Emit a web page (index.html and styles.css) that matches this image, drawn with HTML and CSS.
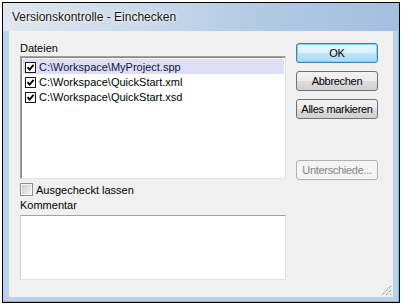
FILE: index.html
```html
<!DOCTYPE html>
<html lang="de">
<head>
    <meta charset="UTF-8">
    <title>Versionskontrolle - Einchecken</title>
    <link rel="stylesheet" href="styles.css">
</head>
<body>
    <div class="window">
        <div class="titlebar">
            <span class="title">Versionskontrolle - Einchecken</span>
        </div>

        <div class="client">
            <div class="left">
                <div class="label">Dateien</div>
                <div class="filelist">
                    <div class="file-row selected">
                        <span class="check"><svg viewBox="0 0 9 9"><path d="M1.5 4.2 L3.6 6.5 L7.6 1.8" /></svg></span>
                        <span class="file-name">C:\Workspace\MyProject.spp</span>
                    </div>
                    <div class="file-row">
                        <span class="check"><svg viewBox="0 0 9 9"><path d="M1.5 4.2 L3.6 6.5 L7.6 1.8" /></svg></span>
                        <span class="file-name">C:\Workspace\QuickStart.xml</span>
                    </div>
                    <div class="file-row">
                        <span class="check"><svg viewBox="0 0 9 9"><path d="M1.5 4.2 L3.6 6.5 L7.6 1.8" /></svg></span>
                        <span class="file-name">C:\Workspace\QuickStart.xsd</span>
                    </div>
                </div>

                <div class="keep">
                    <span class="vista-check"></span>
                    <span>Ausgecheckt lassen</span>
                </div>

                <div class="label">Kommentar</div>
                <div class="comment"></div>
            </div>

            <div class="buttons">
                <button class="btn default">OK</button>
                <button class="btn">Abbrechen</button>
                <button class="btn">Alles markieren</button>
                <button class="btn disabled">Unterschiede...</button>
            </div>

            <!-- size grip -->
            <svg class="grip" viewBox="0 0 11 11">
                <path d="M10 1 L1 10 M10 5 L5 10 M10 9 L9 10" stroke="#8c8c8c" stroke-width="1.2" stroke-dasharray="1 1" />
                <path d="M11 2 L2 11 M11 6 L6 11" stroke="#ffffff" stroke-width="1" stroke-dasharray="1 1" />
            </svg>
        </div>
    </div>
</body>
</html>
```

FILE: styles.css
```css
body {
    margin: 0;
    background: #fff;
    font-family: "Liberation Sans", Arial, sans-serif;
    font-size: 11px;
    color: #000;
}

.window {
    margin: 2px 1px 3px 2px;
    width: 396px;
    height: 299px;
    border: 1px solid #000;
    background: #b9d1ea;
    box-shadow: inset -1px -1px 0 #5fc7e3;
    display: flex;
    flex-direction: column;
}

.titlebar {
    height: 28px;
    display: flex;
    align-items: center;
    padding-left: 9px;
    background: linear-gradient(90deg, #dfe7f0 0%, #c9d9ea 35%, #afc7e3 70%, #a4bfe0 100%);
}

.title {
    font-size: 12px;
    color: #111;
    text-shadow: 0 0 4px #fff, 0 0 2px #fff;
}

.client {
    position: relative;
    margin: 0 6px;
    height: 266px;
    background: #f0f0f0;
    padding: 11px 0 0 11px;
    box-sizing: border-box;
    display: flex;
    gap: 10px;
}

.left {
    width: 266px;
    display: flex;
    flex-direction: column;
}

.label {
    height: 13px;
    line-height: 13px;
}

.filelist {
    margin-top: 1px;
    height: 123px;
    box-sizing: border-box;
    background: #fff;
    border: 1px solid;
    border-color: #a0a0a0 #e3e3e3 #e3e3e3 #a0a0a0;
    box-shadow: inset 1px 1px 0 #828790;
    padding: 2px 1px 0 2px;
}

.file-row {
    height: 15px;
    display: flex;
    align-items: center;
    padding-left: 2px;
    gap: 3px;
}

.file-row.selected {
    background: #dedef7;
}

.file-row.selected .file-name {
    color: #101048;
}

.check {
    width: 11px;
    height: 11px;
    box-sizing: border-box;
    border: 1px solid #1a1a1a;
    background: #fff;
    display: flex;
    margin-top: 2px;
}

.check svg {
    width: 9px;
    height: 9px;
    fill: none;
    stroke: #000;
    stroke-width: 1.9;
}

.keep {
    margin-top: 4px;
    height: 13px;
    display: flex;
    align-items: center;
    gap: 3px;
}

.vista-check {
    width: 13px;
    height: 13px;
    box-sizing: border-box;
    border: 1px solid #8f8f8f;
    background: linear-gradient(135deg, #cbcbcb, #f6f6f6);
    box-shadow: inset 0 0 0 1px #f4f4f4;
}

.keep + .label {
    margin-top: 3px;
}

.comment {
    margin-top: 3px;
    height: 65px;
    box-sizing: border-box;
    background: #fff;
    border: 1px solid;
    border-color: #a0a0a0 #e3e3e3 #dcdce4 #d0d0d0;
}

.buttons {
    width: 82px;
    height: 137px;
    margin-top: 1px;
    display: flex;
    flex-direction: column;
    gap: 8px;
}

.btn {
    width: 82px;
    height: 20px;
    padding: 0;
    border: 1px solid #707070;
    border-radius: 3px;
    background: linear-gradient(#f2f2f2 0%, #ebebeb 50%, #dddddd 51%, #cfcfcf 100%);
    font-family: "Liberation Sans", Arial, sans-serif;
    font-size: 11px;
    letter-spacing: -0.3px;
    color: #000;
    white-space: nowrap;
}

.btn.default {
    border-color: #3c7fb1;
    background: linear-gradient(#eaf6fd 0%, #d9f0fc 50%, #bee6fd 51%, #a7d9f5 100%);
    box-shadow: inset 0 0 0 1px #7fd7f7;
}

.btn.disabled {
    margin-top: auto;
    border-color: #adb2b5;
    background: #f4f4f4;
    color: #838383;
}

.grip {
    position: absolute;
    right: 1px;
    bottom: 1px;
    width: 11px;
    height: 11px;
}
```
